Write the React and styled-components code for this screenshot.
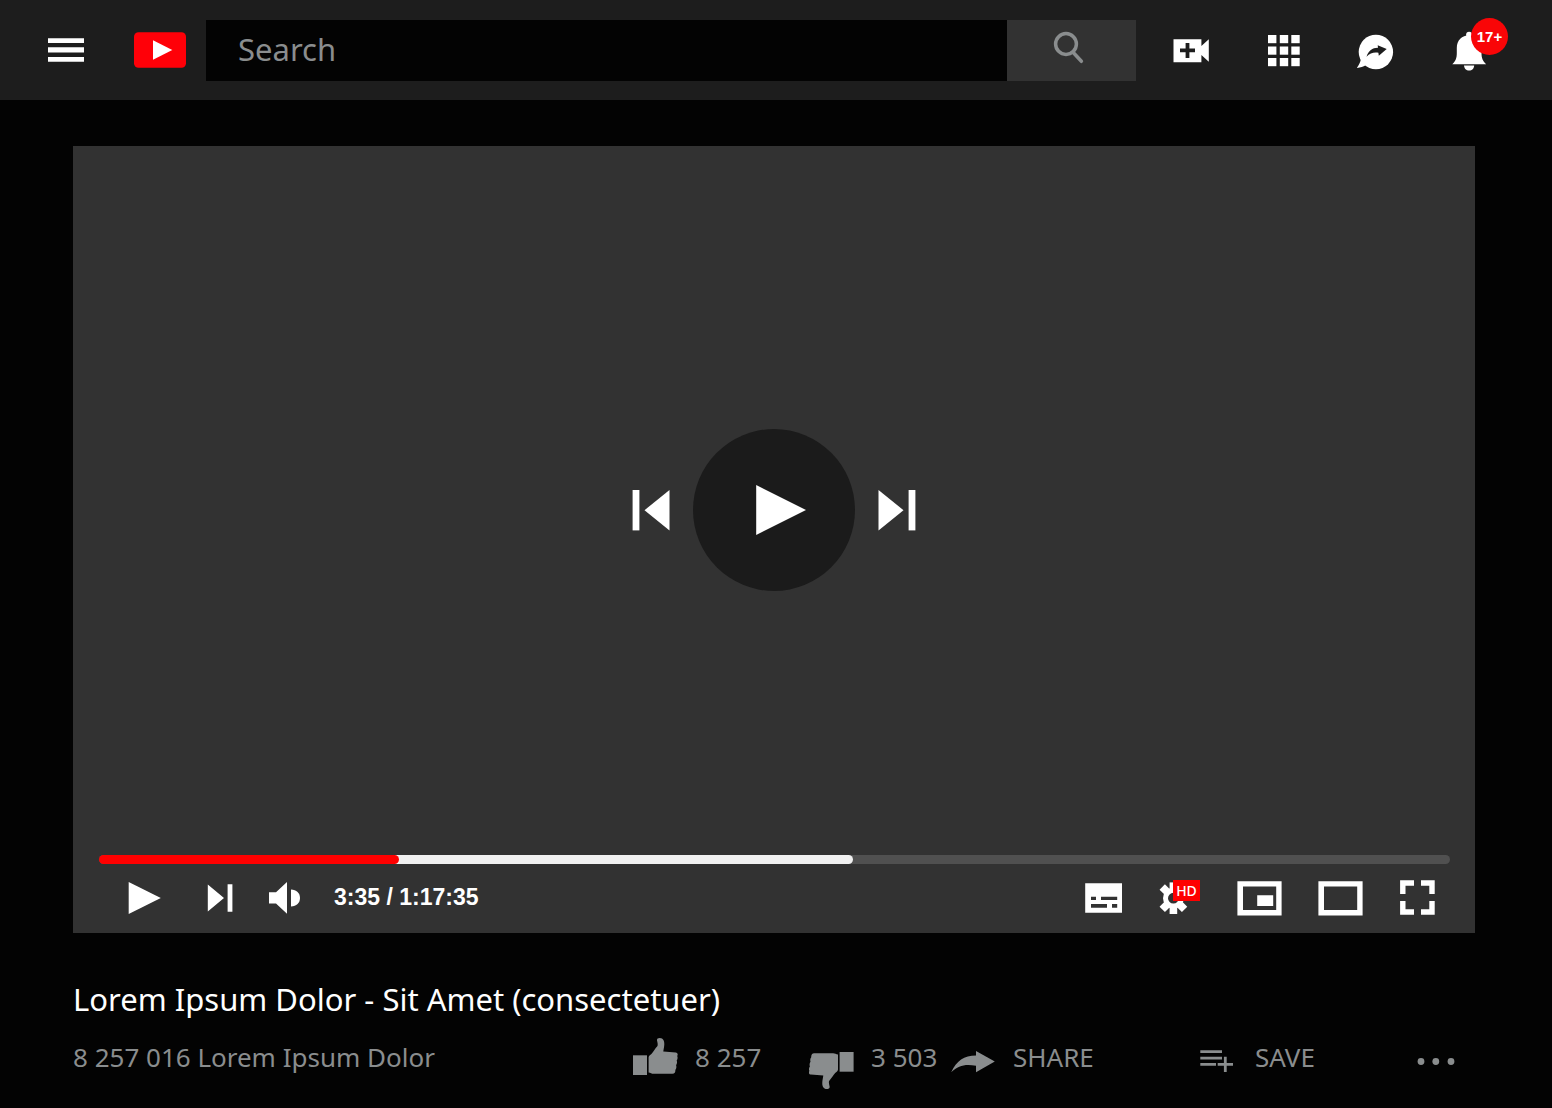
import React from "react";
import styled, { createGlobalStyle } from "styled-components";

const GlobalStyle = createGlobalStyle`
  *, *::before, *::after { box-sizing: border-box; }
  body {
    margin: 0;
    background: #030303;
    color: #fff;
    font-family: "Noto Sans", sans-serif;
  }
`;

const Header = styled.header`
  display: flex;
  align-items: center;
  padding: 20px 62px 19px 48px;
  background: #1d1d1d;
`;

const IconButton = styled.button`
  position: relative;
  display: block;
  flex: none;
  padding: 0;
  border: 0;
  background: none;
  color: #fff;
  cursor: pointer;
`;

const Icon = styled.svg`
  display: block;
  fill: currentColor;
`;

const Logo = styled.a`
  display: block;
  margin: 0 20px 0 50px;
`;

const SearchForm = styled.form`
  display: flex;
  flex: 1;
  min-width: 0;
  height: 61px;
`;

const SearchInput = styled.input`
  flex: 1;
  min-width: 0;
  padding: 0 32px 4px;
  border: 0;
  outline: 0;
  background: #030303;
  color: #fff;
  font: 31px "Noto Sans", sans-serif;
  &::placeholder { color: #8a8d8e; opacity: 1; }
`;

const SearchButton = styled.button`
  display: flex;
  align-items: center;
  justify-content: center;
  width: 129px;
  padding: 0;
  border: 0;
  background: #323232;
  color: #8a8d8e;
`;

const HeaderActions = styled.nav`
  display: flex;
  gap: 53px;
  margin-left: 35px;
`;

const CountBadge = styled.span`
  position: absolute;
  top: -12px;
  left: 21px;
  width: 37px;
  border-radius: 50%;
  background: #f90507;
  font: bold 15px/37px "Liberation Sans", sans-serif;
  text-align: center;
`;

const HdBadge = styled.span`
  position: absolute;
  top: 2px;
  left: 18px;
  width: 27px;
  background: #fe0000;
  font: 500 14px/21px "Noto Sans", sans-serif;
  text-align: center;
`;

const Page = styled.main`
  padding: 46px 77px 19px 73px;
`;

const Player = styled.section`
  display: flex;
  flex-direction: column;
  aspect-ratio: 1402 / 787;
  background: #323232;
`;

const Stage = styled.div`
  display: flex;
  flex: 1;
  align-items: center;
  justify-content: center;
  gap: 23px;
  padding-top: 19px;
`;

const BigPlay = styled.button`
  display: flex;
  align-items: center;
  justify-content: center;
  width: 162px;
  height: 162px;
  padding: 0;
  border: 0;
  border-radius: 50%;
  background: #1b1b1b;
  color: #fff;
`;

const Progress = styled.div`
  position: relative;
  height: 9px;
  margin: 0 25px 0 26px;
  border-radius: 5px;
  background: #505050;
`;

const ProgressFill = styled.div`
  position: absolute;
  inset: 0 ${(p) => 100 - p.$to}% 0 ${(p) => p.$from}%;
  border-radius: 5px;
  background: ${(p) => p.$color};
`;

const Seek = styled.input`
  position: absolute;
  inset: 0;
  width: 100%;
  height: 100%;
  margin: 0;
  opacity: 0;
  cursor: pointer;
`;

const Controls = styled.div`
  display: flex;
  align-items: center;
  justify-content: space-between;
  height: 69px;
  padding: 0 29px 0 51px;
`;

const ControlGroup = styled.div`
  display: flex;
  align-items: center;
  gap: ${(p) => p.$gap}px;
`;

const Time = styled.span`
  padding-bottom: 3px;
  font: bold 23px/38px "Liberation Sans", sans-serif;
`;

const Title = styled.h1`
  margin: 46px 0 18px;
  font-size: 31px;
  font-weight: 400;
  line-height: 40px;
`;

const Meta = styled.div`
  display: grid;
  grid-template-columns: 560fr 176fr 142fr 248fr 218fr 58fr;
  align-items: start;
  color: #8a8d8e;
  font-size: 26px;
  line-height: 40px;
`;

const Action = styled.button`
  display: flex;
  align-items: flex-start;
  gap: 16px;
  padding: 0;
  border: 0;
  background: none;
  color: inherit;
  font: inherit;
  white-space: nowrap;
`;

const Views = styled.span`
  white-space: nowrap;
`;

const Glyph = ({ w = 40, h = 41, children }) => (
  <Icon width={w} height={h} viewBox={`0 0 ${w} ${h}`} aria-hidden="true">
    {children}
  </Icon>
);

const Thumb = () => (
  <>
    <path d="M0 18.3H14V38H0Z" />
    <path d="M15.6 20.5C15.6 18.8 17.2 18.2 18.4 17C20.8 14.6 22 11.6 24.3 9.3C25.2 8.2 24.5 5.5 24 3.5C23.7 1.8 25 1 26.8 1C30.3 1 31.5 4 31.3 7.5C31.2 10 30.6 12 30.3 14.6L42.8 15.4C44.8 15.6 45.2 17.8 44.2 19C44.9 20.3 44.7 22.4 43.7 23.6C44.4 25.2 44 27 43.1 28.2C43.7 30 43.3 31.7 42.4 32.7C42.5 35.3 41.6 36.8 39.4 36.8H20.5C18.6 36.8 17.6 35.6 15.6 35.4Z" />
  </>
);

const SkipNextBig = () => (
  <>
    <path d="M.5 0L25.5 20.2L.5 40.4Z" />
    <path d="M30.6 0H37.4V40.4H30.6Z" />
  </>
);

export default function App() {
  return (
    <>
      <GlobalStyle />
      <Header>
        <IconButton aria-label="Menu">
          <Glyph w={36}>
            <path d="M0 8.3H36V13H0ZM0 17.3H36V22.6H0ZM0 27H36V31.8H0Z" />
          </Glyph>
        </IconButton>
        <Logo href="#" aria-label="Home">
          <Glyph w={52}>
            <rect y="2.2" width="52" height="35.6" rx="4.5" fill="#ff0008" />
            <path d="M19 10.2L38.3 20L19 29.8Z" fill="#fff" />
          </Glyph>
        </Logo>
        <SearchForm role="search" onSubmit={(e) => e.preventDefault()}>
          <SearchInput type="text" placeholder="Search" aria-label="Search" />
          <SearchButton type="submit" aria-label="Submit search">
            <Glyph w={41}>
              <g fill="none" stroke="currentColor" strokeWidth="3.5" strokeLinecap="round">
                <circle cx="15" cy="14" r="10.4" />
                <path d="M22 22.2L30.4 31.3" />
              </g>
            </Glyph>
          </SearchButton>
        </SearchForm>
        <HeaderActions>
          <IconButton aria-label="Create">
            <Glyph>
              <path
                fillRule="evenodd"
                d="M2.5 9.2H30.4V16L37.8 9.2V31.8L30.4 25V32.3H2.5ZM14.6 13V18.5H9V22.3H14.6V28H18.4V22.3H24V18.5H18.4V13Z"
              />
            </Glyph>
          </IconButton>
          <IconButton aria-label="Apps">
            <Glyph>
              {[5, 16.5, 28].map((y) =>
                [4, 15.8, 27.3].map((x) => (
                  <rect key={`${x}-${y}`} x={x} y={y} width="8.4" height="8.2" />
                ))
              )}
            </Glyph>
          </IconButton>
          <IconButton aria-label="Messages">
            <Glyph>
              <circle cx="18.9" cy="22" r="17.2" />
              <path d="M4 28.5C3.5 32 2 35 -.2 38C3.5 37.4 6.2 36.7 8.7 35.2Z" />
              <path
                fill="#1d1d1d"
                d="M9.5 26.8C11.6 20.5 15.5 17.7 21 17.8L20.7 15.2L29.7 19L21.8 25.7L21.4 22.8C16.8 22 13 23.2 9.5 26.8Z"
              />
            </Glyph>
          </IconButton>
          <IconButton aria-label="Notifications, 17+ new">
            <Glyph>
              <circle cx="19.1" cy="4.8" r="3" />
              <path d="M2.3 34.2C5.8 30.8 6.8 28 6.8 23V18C6.8 10 12 5.2 19.1 5.2S31.5 10 31.5 18V23C31.5 28 32.6 30.8 36.2 34.2Z" />
              <path d="M14 35.4H24.2C24 38.5 22 40.6 19.1 40.6S14.2 38.5 14 35.4Z" />
            </Glyph>
            <CountBadge>17+</CountBadge>
          </IconButton>
        </HeaderActions>
      </Header>

      <Page>
        <Player aria-label="Video player">
          <Stage>
            <IconButton aria-label="Previous video">
              <Glyph w={38}>
                <g transform="matrix(-1 0 0 1 38 0)">
                  <SkipNextBig />
                </g>
              </Glyph>
            </IconButton>
            <BigPlay aria-label="Play video">
              <Glyph w={64} h={50}>
                <path d="M14.2 0L64 25L14.2 50Z" />
              </Glyph>
            </BigPlay>
            <IconButton aria-label="Next video">
              <Glyph w={38}>
                <SkipNextBig />
              </Glyph>
            </IconButton>
          </Stage>
          <Progress>
            <ProgressFill $from={10} $to={55.8} $color="#f1f1f1" />
            <ProgressFill $from={0} $to={22.2} $color="#ff0000" />
            <Seek type="range" min="0" max="4655" defaultValue="215" aria-label="Seek" />
          </Progress>
          <Controls>
            <ControlGroup $gap={30}>
              <IconButton aria-label="Play">
                <Glyph>
                  <path d="M4.7 4L36.8 20L4.7 36Z" />
                </Glyph>
              </IconButton>
              <IconButton aria-label="Next">
                <Glyph>
                  <path d="M13.8 6.4L30 20L13.8 33.6ZM33.6 6.3H38.4V33.7H33.6Z" />
                </Glyph>
              </IconButton>
              <IconButton aria-label="Mute">
                <Glyph>
                  <path d="M5 14.2H12L23 4V35.8L12 25.6H5Z" />
                  <path d="M27 11.4C32.5 11.4 36 15 36 19.9S32.5 28.4 27 28.4Z" />
                </Glyph>
              </IconButton>
              <Time>3:35 / 1:17:35</Time>
            </ControlGroup>
            <ControlGroup $gap={33}>
              <IconButton aria-label="Subtitles">
                <Glyph w={48}>
                  <path
                    fillRule="evenodd"
                    d="M11.2 5.2H48V34.7H11.2ZM17 18.7V22H22V18.7ZM27 18.7V22H43.2V18.7ZM17 26V29.7H33V26ZM38 26V29.7H43.2V26Z"
                  />
                </Glyph>
              </IconButton>
              <IconButton aria-label="Settings, HD">
                <Glyph w={48}>
                  <g transform="translate(18.4 20.2)">
                    {[0, 45, 135, 180, 225, 315].map((a) => (
                      <rect key={a} x="-3.8" y="-15.8" width="7.6" height="8" transform={`rotate(${a})`} />
                    ))}
                    <circle r="7.9" fill="none" stroke="currentColor" strokeWidth="5" />
                  </g>
                </Glyph>
                <HdBadge>HD</HdBadge>
              </IconButton>
              <IconButton aria-label="Miniplayer">
                <Glyph w={48}>
                  <path
                    fillRule="evenodd"
                    d="M1.4 3.2H45.6V37.5H1.4ZM7 8.5V32H40.2V8.5ZM21.2 17.3H37.2V28H21.2Z"
                  />
                </Glyph>
              </IconButton>
              <IconButton aria-label="Theater mode">
                <Glyph w={48}>
                  <path fillRule="evenodd" d="M1.4 3.2H45.6V37.5H1.4ZM7 8.5V32H40.2V8.5Z" />
                </Glyph>
              </IconButton>
              <IconButton aria-label="Full screen">
                <Glyph w={48}>
                  <path
                    fill="none"
                    stroke="currentColor"
                    strokeWidth="5.4"
                    d="M4.8 16V5H16M23 5H34V16M34 23V34H23M16 34H4.8V23"
                  />
                </Glyph>
              </IconButton>
            </ControlGroup>
          </Controls>
        </Player>

        <Title>Lorem Ipsum Dolor - Sit Amet (consectetuer)</Title>
        <Meta>
          <Views>8 257 016 Lorem Ipsum Dolor</Views>
          <Action>
            <Glyph w={46} h={52}>
              <Thumb />
            </Glyph>
            8 257
          </Action>
          <Action>
            <Glyph w={46} h={52}>
              <g transform="rotate(180 22.3 26.5)">
                <Thumb />
              </g>
            </Glyph>
            3 503
          </Action>
          <Action>
            <Glyph w={46} h={52}>
              <path d="M.2 35.3C5.5 23.5 13 18.6 25 18.4V14L43.8 24.4L25 35.2V28.7C14.5 27 7.5 28 .2 35.3Z" />
            </Glyph>
            SHARE
          </Action>
          <Action>
            <Glyph h={52}>
              <path d="M1.3 13.2H23V15.9H1.3ZM1.3 19.8H23V22.5H1.3ZM1.3 26.1H17V28.8H1.3ZM24.9 19.8H27.7V26.1H34V28.8H27.7V35H24.9V28.8H18.7V26.1H24.9Z" />
            </Glyph>
            SAVE
          </Action>
          <Action aria-label="More actions">
            <Glyph h={52}>
              <circle cx="4" cy="24.5" r="3.4" />
              <circle cx="18.8" cy="24.5" r="3.4" />
              <circle cx="34" cy="24.5" r="3.4" />
            </Glyph>
          </Action>
        </Meta>
      </Page>
    </>
  );
}
